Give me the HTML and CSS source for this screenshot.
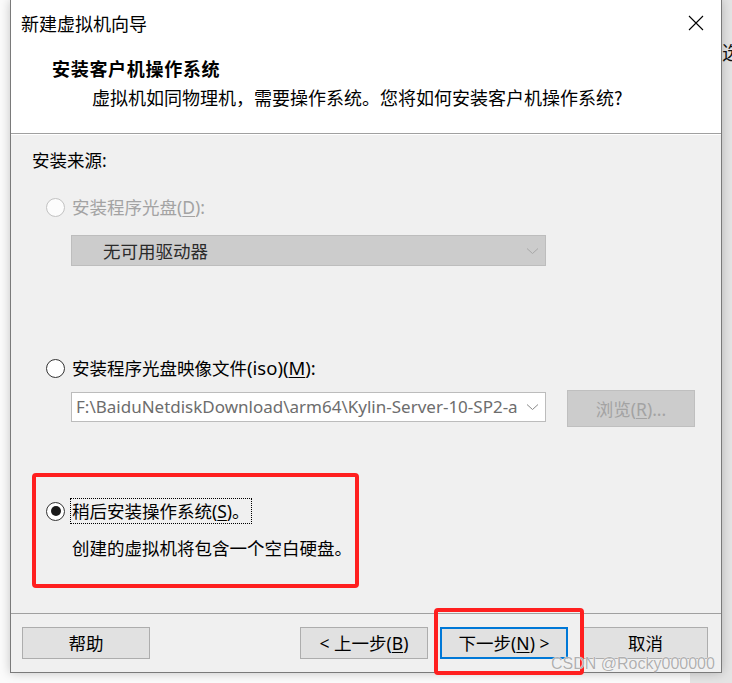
FILE: index.html
```html
<!DOCTYPE html>
<html lang="zh-CN">
<head>
<meta charset="utf-8">
<title>新建虚拟机向导</title>
<link rel="stylesheet" href="styles.css">
</head>
<body>
<div class="backwin"><span class="backtext">选</span></div>
<div class="dialog">
  <div class="header">
    <div class="titlebar">
      <span class="title">新建虚拟机向导</span>
      <svg class="close" width="16" height="16" viewBox="0 0 16 16"><path d="M1 1L15 15M15 1L1 15" stroke="#000" stroke-width="1.1" fill="none"/></svg>
    </div>
    <div class="heading">安装客户机操作系统</div>
    <div class="desc">虚拟机如同物理机，需要操作系统。您将如何安装客户机操作系统?</div>
  </div>
  <div class="content">
    <div class="group-label">安装来源:</div>
    <div class="radio-row row-cd disabled"><span class="radio"></span><span class="lbl">安装程序光盘(<u>D</u>):</span></div>
    <div class="select disabled">
      <span class="select-text">无可用驱动器</span>
      <svg class="chev" width="13" height="8" viewBox="0 0 13 8"><path d="M1 1.5L6.5 6.5L12 1.5" stroke="#a8a8a8" stroke-width="1" fill="none"/></svg>
    </div>
    <div class="radio-row row-iso"><span class="radio"></span><span class="lbl">安装程序光盘映像文件<span class="latin">(iso)(<u>M</u>):</span></span></div>
    <div class="iso-row">
      <div class="combo">
        <span class="combo-text">F:\BaiduNetdiskDownload\arm64\Kylin-Server-10-SP2-a</span>
        <svg class="chev" width="13" height="8" viewBox="0 0 13 8"><path d="M1 1.5L6.5 6.5L12 1.5" stroke="#8a8a8a" stroke-width="1" fill="none"/></svg>
      </div>
      <div class="btn browse">浏览(<u>R</u>)...</div>
    </div>
    <div class="radio-row row-later"><span class="radio checked"></span><span class="lbl focus">稍后安装操作系统(<u>S</u>)。</span></div>
    <div class="note">创建的虚拟机将包含一个空白硬盘。</div>
  </div>
  <div class="footer">
    <div class="btn help">帮助</div>
    <div class="btn back">&lt; 上一步(<u>B</u>)</div>
    <div class="btn next">下一步(<u>N</u>) &gt;</div>
    <div class="btn cancel">取消</div>
  </div>
</div>
<div class="mark mark-later"></div>
<div class="mark mark-next"></div>
<div class="watermark">CSDN @Rocky000000</div>
</body>
</html>
```
FILE: styles.css
```css
* { box-sizing: border-box; }
html, body { margin: 0; padding: 0; }
body {
  width: 732px;
  height: 683px;
  overflow: hidden;
  position: relative;
  background: #fbfbfb;
  font-family: "Noto Sans", "Noto Sans CJK SC", sans-serif;
  color: #000;
}
u { text-decoration: underline; text-underline-offset: 2px; }

.backwin {
  position: absolute;
  left: 690px;
  top: 0;
  width: 60px;
  height: 683px;
  background: #e4e4e4;
}
.backtext {
  position: absolute;
  left: 32px;
  top: 40px;
  font-family: "Noto Sans CJK SC", sans-serif;
  font-size: 19px;
  line-height: 24px;
  color: #111;
}

.dialog {
  position: relative;
  margin-left: 10px;
  width: 712px;
  height: 673px;
  border: 1px solid #7a7a7a;
  border-top: none;
  background: #f0f0f0;
  box-shadow: 0 0 10px rgba(0, 0, 0, 0.22);
  display: flex;
  flex-direction: column;
}

.header {
  height: 134px;
  background: #fff;
  border-bottom: 1px solid #a0a0a0;
  font-family: "Noto Sans CJK SC", sans-serif;
}
.titlebar {
  height: 46px;
  display: flex;
  align-items: center;
  justify-content: space-between;
  padding-left: 10px;
  padding-right: 17px;
}
.title { font-size: 18px; line-height: 24px; }
.close { display: block; }
.heading {
  margin-top: 10px;
  padding-left: 41px;
  font-size: 18px;
  font-weight: bold;
  line-height: 24px;
  letter-spacing: 0.7px;
}
.desc {
  margin-top: 5px;
  padding-left: 81px;
  font-size: 18px;
  line-height: 24px;
}

.content {
  height: 479px;
  border-top: 1px solid #fff;
  padding: 13px 0 0 21px;
  font-size: 17.5px;
}
.group-label { line-height: 24px; }

.radio-row {
  display: flex;
  align-items: center;
  height: 24px;
  line-height: 24px;
  padding-left: 14px;
}
.radio {
  width: 19px;
  height: 19px;
  border-radius: 50%;
  border: 1px solid #333;
  background: #fff;
  display: flex;
  align-items: center;
  justify-content: center;
  flex: none;
}
.radio.checked::after {
  content: "";
  width: 10px;
  height: 10px;
  border-radius: 50%;
  background: #1a1a1a;
}
.lbl { margin-left: 7px; }
.latin { font-size: 18.5px; }
.disabled .radio { border-color: #c2c2c2; background: #fcfcfc; }
.disabled .lbl { color: #a3a3a3; }

.row-cd { margin-top: 23px; }
.row-iso { margin-top: 90px; }
.row-later { margin-top: 72px; }

.lbl.focus {
  margin-left: 5px;
  border: 1px dotted #000;
  padding: 0 1px;
  height: 26px;
  line-height: 24px;
}

.select {
  margin-top: 16px;
  margin-left: 39px;
  width: 475px;
  height: 31px;
  border: 1px solid #bdbdbd;
  background: #cccccc;
  display: flex;
  align-items: center;
  padding-left: 31px;
  padding-right: 6px;
}
.select-text { flex: 1; color: #2a2a2a; line-height: 24px; }
.chev { display: block; flex: none; }

.iso-row {
  margin-top: 10px;
  display: flex;
  align-items: flex-start;
  margin-left: 39px;
}
.combo {
  margin-top: 2px;
  width: 475px;
  height: 30px;
  border: 1px solid #bcbcbc;
  background: #fff;
  display: flex;
  align-items: center;
  padding-left: 4px;
  padding-right: 6px;
}
.combo-text {
  width: 443px;
  white-space: nowrap;
  color: #6d6d6d;
  font-size: 17px;
  line-height: 24px;
  margin-right: 8px;
}

.btn {
  height: 32px;
  display: flex;
  align-items: center;
  justify-content: center;
  border: 1px solid #adadad;
  background: #e1e1e1;
  font-size: 17.5px;
  line-height: 24px;
  color: #000;
}
.browse {
  margin-left: 21px;
  width: 128px;
  height: 37px;
  background: #cccccc;
  border-color: #bfbfbf;
  color: #a3a3a3;
}

.note {
  margin-top: 13px;
  margin-left: 40px;
  line-height: 24px;
}

.footer {
  height: 59px;
  border-top: 1px solid #a0a0a0;
  padding: 13px 0 0 11px;
  display: flex;
  align-items: flex-start;
}
.help { width: 128px; }
.back { width: 128px; margin-left: 150px; }
.next { width: 128px; margin-left: 12px; border: 2px solid #0078d7; }
.cancel { width: 125px; margin-left: 15px; }

.mark {
  position: absolute;
  border: 4px solid #ff1f1f;
  border-radius: 4px;
}
.mark-later { left: 32px; top: 473px; width: 327px; height: 115px; }
.mark-next { left: 434px; top: 608px; width: 150px; height: 67px; }

.watermark {
  position: absolute;
  left: 551px;
  top: 654px;
  font-family: "Liberation Sans", sans-serif;
  font-size: 16px;
  line-height: 20px;
  color: #b0b0b0;
  text-shadow: 0 0 1px #fff, 0 0 1px #fff;
}
```
